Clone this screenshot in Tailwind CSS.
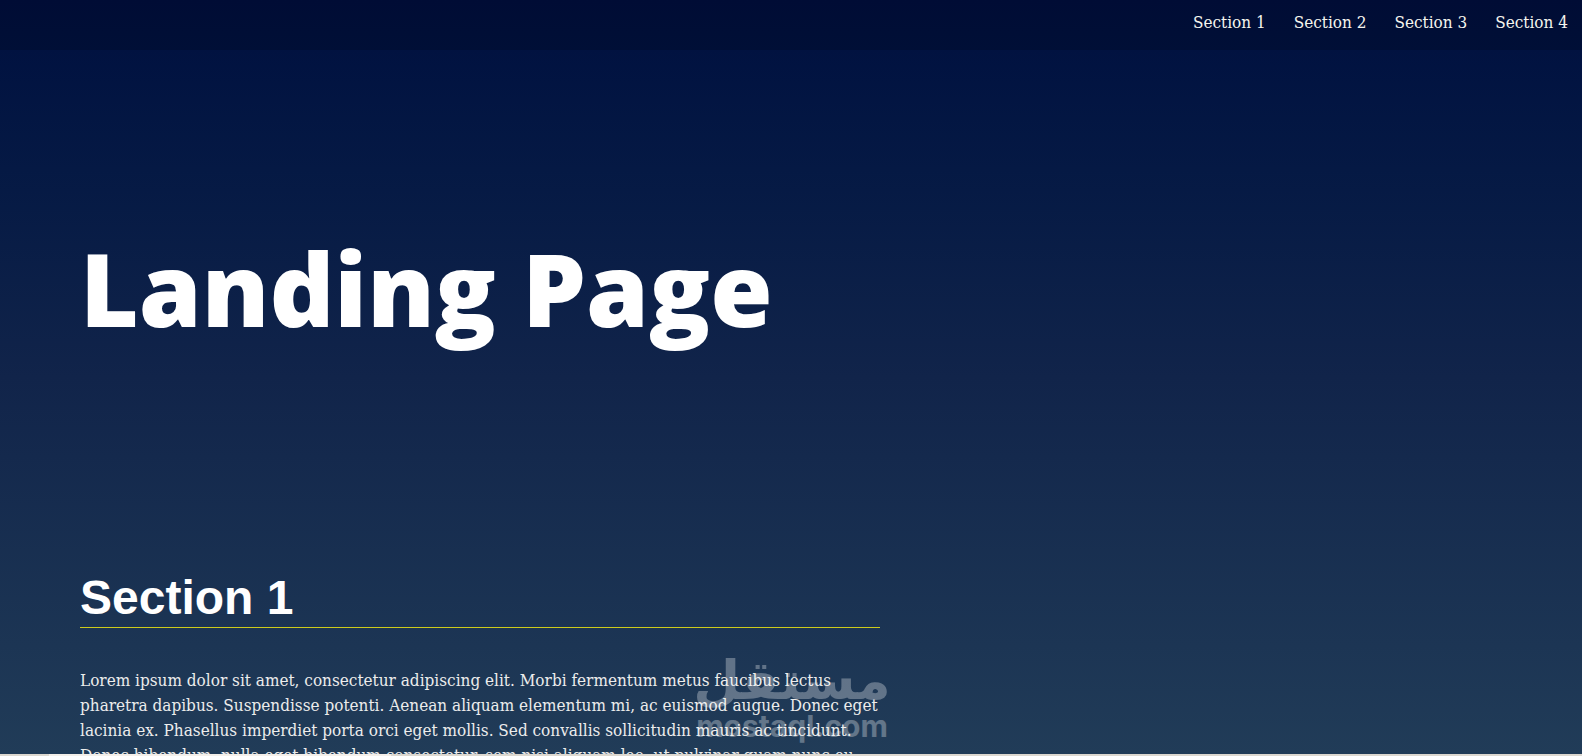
<!DOCTYPE html>
<html lang="en">
<head>
  <meta charset="UTF-8"/>
  <meta name="viewport" content="width=device-width,initial-scale=1.0"/>
  <title>Landing Page</title>
  <script src="https://cdn.jsdelivr.net/npm/@tailwindcss/browser@4"></script>
</head>
<body class="h-screen flex flex-col overflow-hidden text-white font-['DejaVu_Serif_Condensed','DejaVu_Serif',serif] bg-linear-to-b from-[#000f3f] via-[#11244a] to-[#213c58]">

  <!-- Navigation -->
  <header class="shrink-0 bg-black/15">
    <nav class="h-[50px] px-[14px] pb-[4px]">
      <ul class="h-full flex items-center justify-end gap-[28px] text-[17px] text-[#f5f5ee]">
        <li><a href="#section1">Section 1</a></li>
        <li><a href="#section2">Section 2</a></li>
        <li><a href="#section3">Section 3</a></li>
        <li><a href="#section4">Section 4</a></li>
      </ul>
    </nav>
  </header>

  <!-- Content -->
  <main class="flex-1 min-h-0 overflow-hidden px-[80px]">
    <h1 class="pt-[160px] text-[101px] leading-[156px] font-extrabold font-['Open_Sans',sans-serif]">Landing Page</h1>

    <section id="section1" class="relative w-[800px] max-w-full pt-[203px]">
      <h2 class="border-b border-[#cccc1c] text-[48px] leading-[58px] font-bold font-['Liberation_Sans',sans-serif]">Section 1</h2>
      <p class="pt-[40px] text-[17px] leading-[25px] whitespace-nowrap text-[#ececec]">
        Lorem ipsum dolor sit amet, consectetur adipiscing elit. Morbi fermentum metus faucibus lectus<br/>
        pharetra dapibus. Suspendisse potenti. Aenean aliquam elementum mi, ac euismod augue. Donec eget<br/>
        lacinia ex. Phasellus imperdiet porta orci eget mollis. Sed convallis sollicitudin mauris ac tincidunt.<br/>
        Donec bibendum, nulla eget bibendum consectetur, sem nisi aliquam leo, ut pulvinar quam nunc eu
      </p>

      <!-- Watermark -->
      <div class="absolute -right-[8px] top-[286px] w-[192px] flex flex-col items-center whitespace-nowrap text-white font-bold opacity-30">
        <span lang="ar" dir="rtl" class="text-[54px] leading-[58px] font-['DejaVu_Sans',sans-serif]">مستقل</span>
        <span class="text-[30px] leading-[32px] font-['Inter',sans-serif]">mostaql.com</span>
      </div>
    </section>
  </main>

  <!-- Bottom edge -->
  <footer class="shrink-0 h-[2px] flex bg-[#dcd8d0]">
    <div class="w-[342px] ml-[49px] bg-[#f3efea]"></div>
  </footer>
</body>
</html>
